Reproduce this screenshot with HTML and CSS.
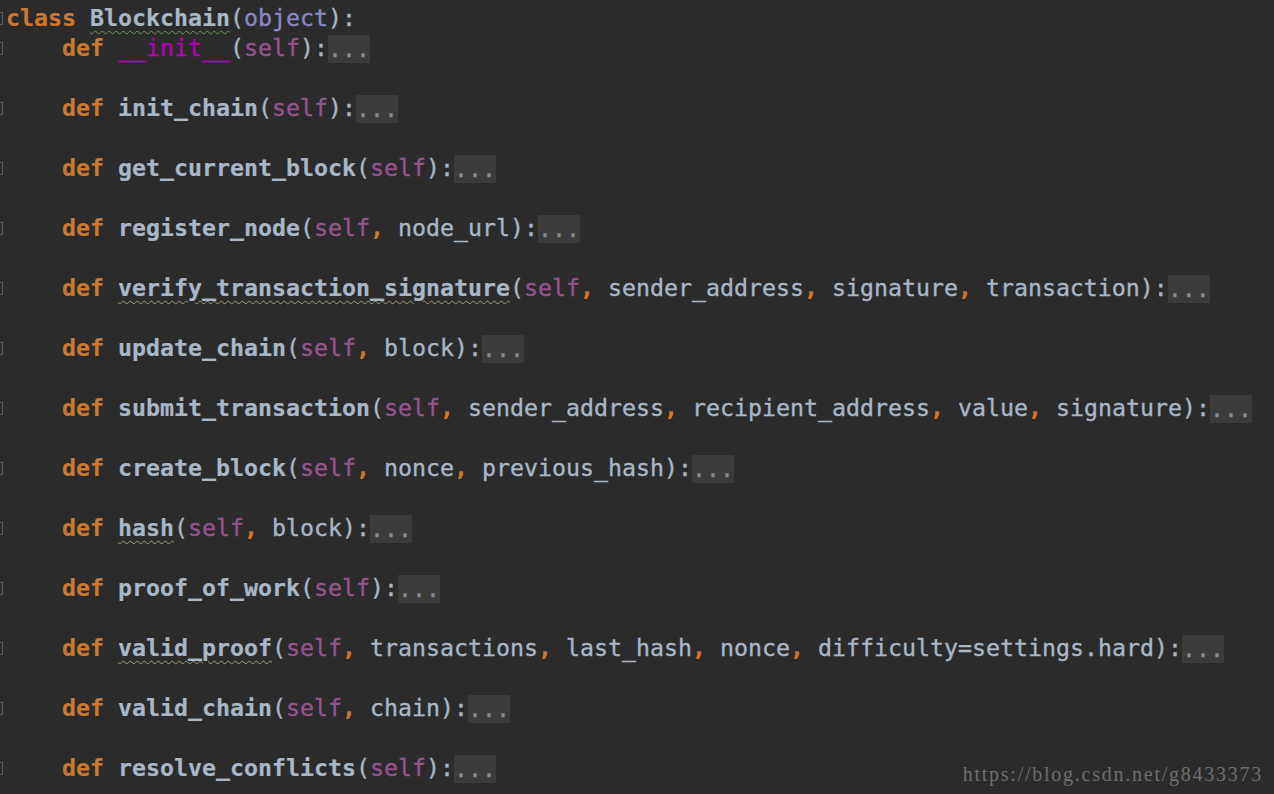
FILE: index.html
```html
<!DOCTYPE html>
<html>
<head>
<meta charset="utf-8">
<link rel="stylesheet" href="styles.css">
</head>
<body>
<div class="editor">
  <div class="line"><span class="gutter"><i class="fold"></i></span><span class="code"><b class="kw">class</b> <b class="typo">Blockchain</b>(<span class="builtin">object</span>):</span></div>
  <div class="line"><span class="gutter"><i class="fold"></i></span><span class="code">    <b class="kw">def</b> <span class="magic">__init__</span>(<span class="self">self</span>):<span class="folded">...</span></span></div>
  <div class="line"><span class="gutter"></span><span class="code"> </span></div>
  <div class="line"><span class="gutter"><i class="fold"></i></span><span class="code">    <b class="kw">def</b> <b>init_chain</b>(<span class="self">self</span>):<span class="folded">...</span></span></div>
  <div class="line"><span class="gutter"></span><span class="code"> </span></div>
  <div class="line"><span class="gutter"><i class="fold"></i></span><span class="code">    <b class="kw">def</b> <b>get_current_block</b>(<span class="self">self</span>):<span class="folded">...</span></span></div>
  <div class="line"><span class="gutter"></span><span class="code"> </span></div>
  <div class="line"><span class="gutter"><i class="fold"></i></span><span class="code">    <b class="kw">def</b> <b>register_node</b>(<span class="self">self</span><b class="kw">,</b> node_url):<span class="folded">...</span></span></div>
  <div class="line"><span class="gutter"></span><span class="code"> </span></div>
  <div class="line"><span class="gutter"><i class="fold"></i></span><span class="code">    <b class="kw">def</b> <b class="warn">verify_transaction_signature</b>(<span class="self">self</span><b class="kw">,</b> sender_address<b class="kw">,</b> signature<b class="kw">,</b> transaction):<span class="folded">...</span></span></div>
  <div class="line"><span class="gutter"></span><span class="code"> </span></div>
  <div class="line"><span class="gutter"><i class="fold"></i></span><span class="code">    <b class="kw">def</b> <b>update_chain</b>(<span class="self">self</span><b class="kw">,</b> block):<span class="folded">...</span></span></div>
  <div class="line"><span class="gutter"></span><span class="code"> </span></div>
  <div class="line"><span class="gutter"><i class="fold"></i></span><span class="code">    <b class="kw">def</b> <b>submit_transaction</b>(<span class="self">self</span><b class="kw">,</b> sender_address<b class="kw">,</b> recipient_address<b class="kw">,</b> value<b class="kw">,</b> signature):<span class="folded">...</span></span></div>
  <div class="line"><span class="gutter"></span><span class="code"> </span></div>
  <div class="line"><span class="gutter"><i class="fold"></i></span><span class="code">    <b class="kw">def</b> <b>create_block</b>(<span class="self">self</span><b class="kw">,</b> nonce<b class="kw">,</b> previous_hash):<span class="folded">...</span></span></div>
  <div class="line"><span class="gutter"></span><span class="code"> </span></div>
  <div class="line"><span class="gutter"><i class="fold"></i></span><span class="code">    <b class="kw">def</b> <b class="warn">hash</b>(<span class="self">self</span><b class="kw">,</b> block):<span class="folded">...</span></span></div>
  <div class="line"><span class="gutter"></span><span class="code"> </span></div>
  <div class="line"><span class="gutter"><i class="fold"></i></span><span class="code">    <b class="kw">def</b> <b>proof_of_work</b>(<span class="self">self</span>):<span class="folded">...</span></span></div>
  <div class="line"><span class="gutter"></span><span class="code"> </span></div>
  <div class="line"><span class="gutter"><i class="fold"></i></span><span class="code">    <b class="kw">def</b> <b class="warn">valid_proof</b>(<span class="self">self</span><b class="kw">,</b> transactions<b class="kw">,</b> last_hash<b class="kw">,</b> nonce<b class="kw">,</b> difficulty=settings.hard):<span class="folded">...</span></span></div>
  <div class="line"><span class="gutter"></span><span class="code"> </span></div>
  <div class="line"><span class="gutter"><i class="fold"></i></span><span class="code">    <b class="kw">def</b> <b>valid_chain</b>(<span class="self">self</span><b class="kw">,</b> chain):<span class="folded">...</span></span></div>
  <div class="line"><span class="gutter"></span><span class="code"> </span></div>
  <div class="line"><span class="gutter"><i class="fold"></i></span><span class="code">    <b class="kw">def</b> <b>resolve_conflicts</b>(<span class="self">self</span>):<span class="folded">...</span></span></div>
</div>
<div class="watermark">https://blog.csdn.net/g8433373</div>
</body>
</html>
```
FILE: styles.css
```css
html, body {
  margin: 0;
  padding: 0;
  background: #2b2b2b;
  width: 1274px;
  height: 794px;
  overflow: hidden;
}
body {
  position: relative;
}
.editor {
  padding-top: 3px;
  font-family: "DejaVu Sans Mono", monospace;
  font-size: 23.25px;
  color: #a9b7c6;
  -webkit-text-stroke: 0.35px currentColor;
}
.line {
  display: flex;
  align-items: center;
  height: 30px;
  line-height: 30px;
}
.gutter {
  width: 6px;
  flex: none;
  display: flex;
  align-items: center;
  height: 30px;
}
.fold {
  display: block;
  width: 2px;
  height: 11px;
  border: 1px solid #5c5c5c;
  border-left: none;
}
.code {
  white-space: pre;
}
b {
  font-weight: bold;
  -webkit-text-stroke: 0.2px currentColor;
}
.kw {
  color: #cc7832;
}
.builtin {
  color: #8888c6;
}
.self {
  color: #94558d;
}
.magic {
  color: #b200b2;
}
.typo {
  text-decoration: underline wavy #6f9a5a;
  text-decoration-thickness: 1px;
  text-underline-offset: 4px;
}
.warn {
  text-decoration: underline wavy #a09a6a;
  text-decoration-thickness: 1px;
  text-underline-offset: 4px;
}
.folded {
  display: inline-block;
  background: #3b3b3b;
  color: #8a8a8a;
  height: 28px;
  line-height: 28px;
  vertical-align: middle;
}
.watermark {
  position: absolute;
  right: 11px;
  bottom: 8px;
  font-family: "Liberation Serif", serif;
  font-size: 20px;
  letter-spacing: 1.75px;
  color: #6f6f6f;
}
```
